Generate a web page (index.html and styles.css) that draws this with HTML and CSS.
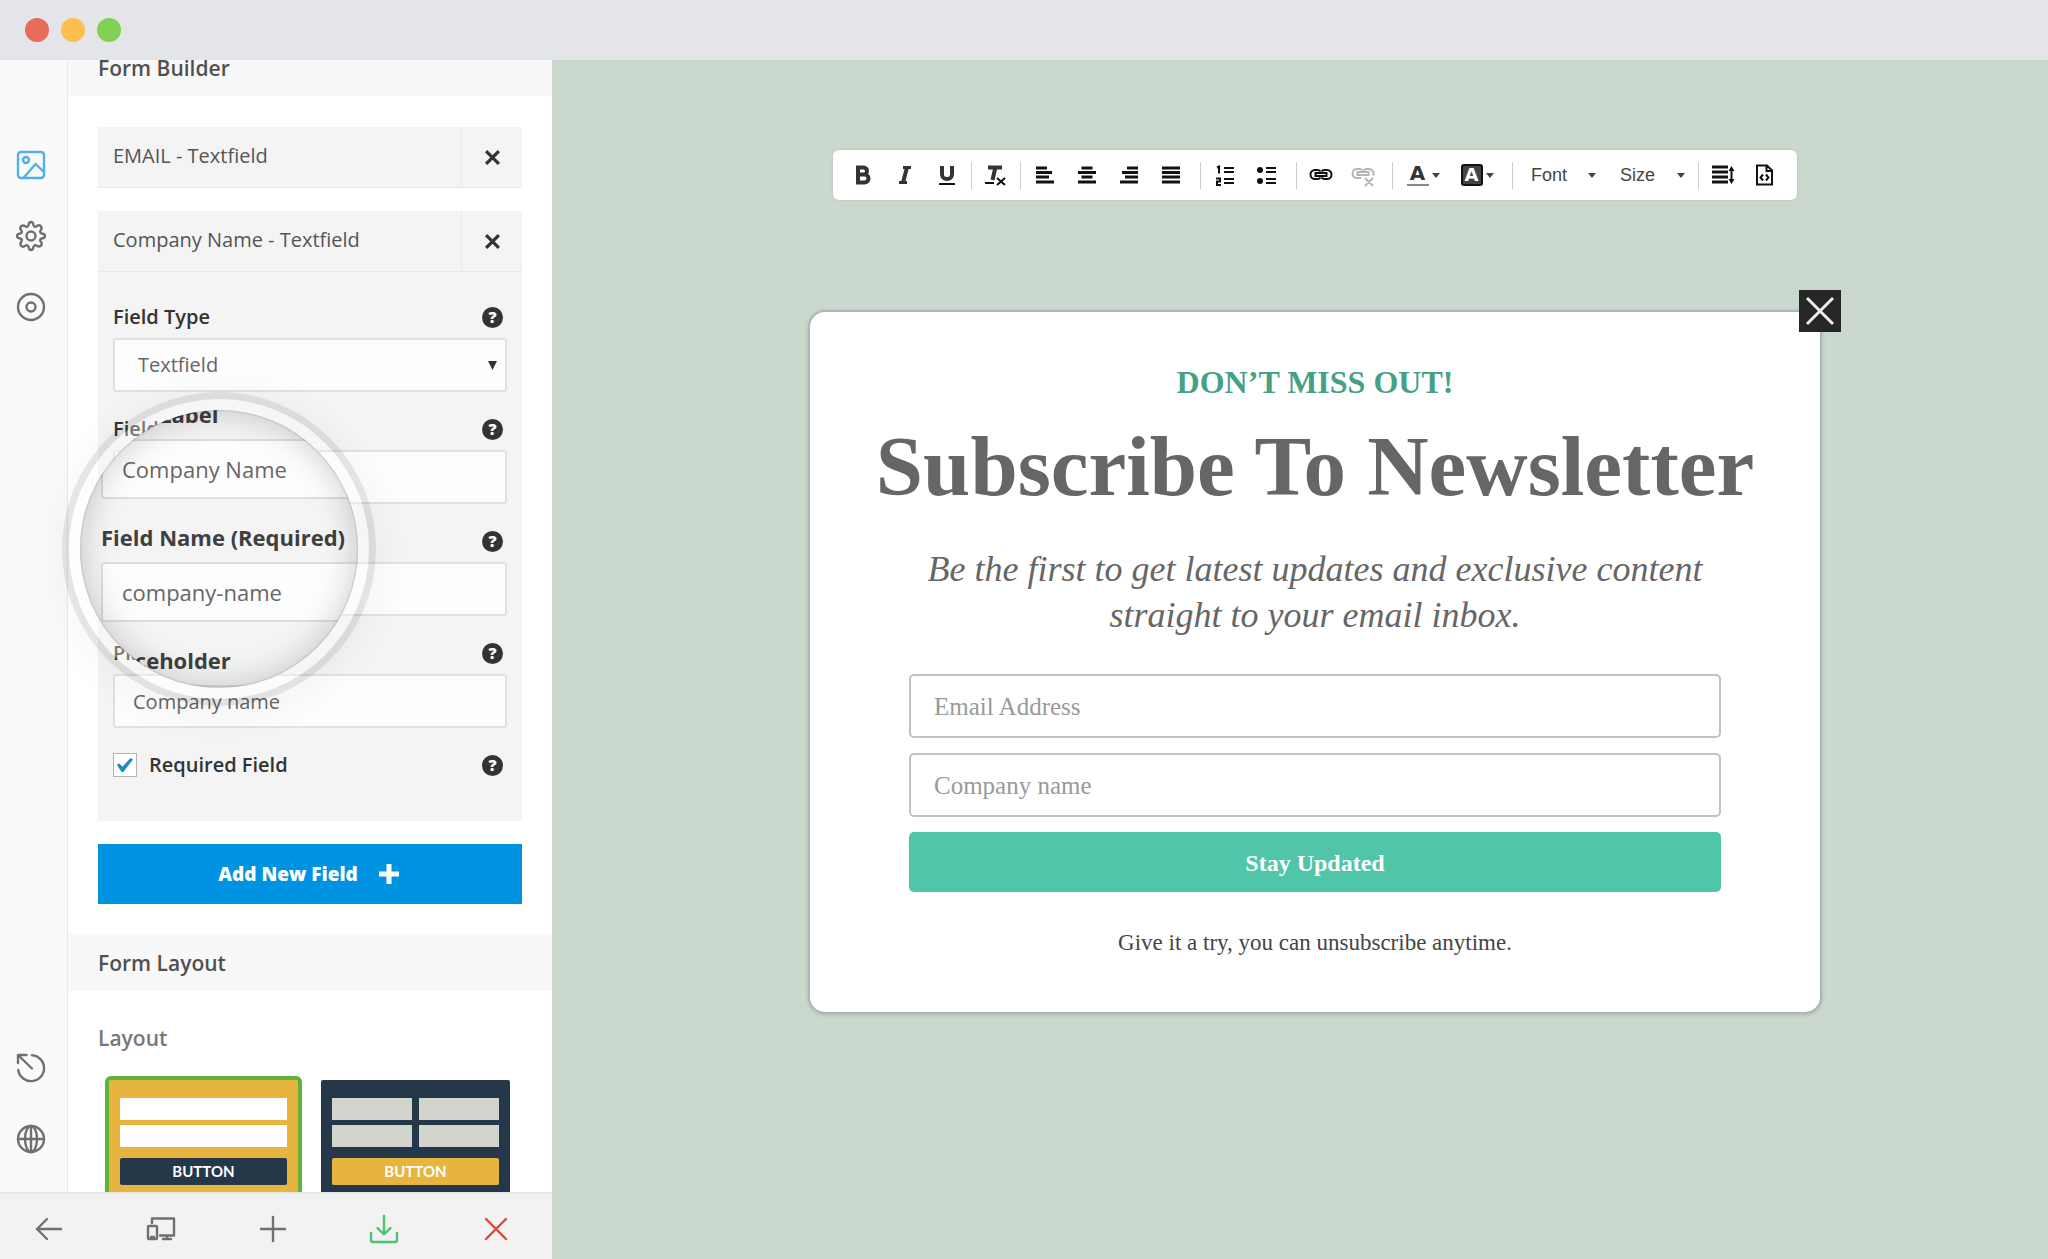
FILE: index.html
```html
<!DOCTYPE html>
<html lang="en">
<head>
<meta charset="utf-8">
<title>Form Builder</title>
<link rel="stylesheet" href="styles.css">
</head>
<body>
<header class="titlebar">
  <span class="dot dot-red"></span>
  <span class="dot dot-yellow"></span>
  <span class="dot dot-green"></span>
</header>
<div class="workspace">
  <aside class="sidebar">
    <div class="sidebar-main">
      <nav class="rail" aria-label="Sections">
        <button class="icon-btn active" aria-label="Design"><svg class="icon" viewBox="0 0 32 32"><rect x="3" y="3" width="26" height="26" rx="3"/><circle cx="11" cy="11" r="3"/><path d="M8.500 29 20.500 15l8.500 8"/></svg></button>
        <button class="icon-btn" aria-label="Settings"><svg class="icon" viewBox="0 0 32 32"><path d="M13.500 5.200Q14 2 16 2t2.500 3.200q.5 1.800 2.300 1.600Q24 4 25.800 6.200T25.200 11.200Q25 13 26.800 13.500 30 14 30 16t-3.200 2.500q-1.800.5-1.600 2.300Q28 24 25.800 25.800T20.800 25.200Q19 25 18.500 26.800 18 30 16 30t-2.500-3.200q-.5-1.800-2.300-1.600Q8 28 6.200 25.800T6.800 20.800Q7 19 5.200 18.500 2 18 2 16t3.200-2.500q1.800-.5 1.600-2.300Q4 8 6.200 6.200T11.200 6.800Q13 7 13.500 5.200z"/><circle cx="16" cy="16" r="4.500"/></svg></button>
        <button class="icon-btn" aria-label="Targeting"><svg class="icon" viewBox="0 0 32 32"><circle cx="16" cy="16" r="13"/><circle cx="16" cy="16" r="4.500"/></svg></button>
        <button class="icon-btn rail-bottom" aria-label="Reset"><svg class="icon" viewBox="0 0 32 32"><path d="M17 3.200A13 13 0 1 1 3.200 18M3 11V3h8.500M3.500 3.500 17 16.500"/></svg></button>
        <button class="icon-btn" aria-label="Language"><svg class="icon" viewBox="0 0 32 32"><circle cx="16" cy="16" r="13"/><ellipse cx="16" cy="16" rx="6" ry="13"/><path d="M3 16h26M16 3v26"/></svg></button>
      </nav>
      <div class="panel">
        <div class="panel-scroll">
          <h2 class="section-title">Form Builder</h2>
          <div class="fields">
            <section class="field-card">
              <div class="field-head"><span class="field-name">EMAIL - Textfield</span><button class="remove" aria-label="Remove field"><svg viewBox="0 0 16 16"><path d="m2 2 12 12M14 2 2 14"/></svg></button></div>
            </section>
            <section class="field-card">
              <div class="field-head"><span class="field-name">Company Name - Textfield</span><button class="remove" aria-label="Remove field"><svg viewBox="0 0 16 16"><path d="m2 2 12 12M14 2 2 14"/></svg></button></div>
              <div class="field-body">
                <div class="row">
                  <div class="row-label"><label for="ftype">Field Type</label><button class="help">?</button></div>
                  <div class="select-wrap"><select class="control select" id="ftype"><option>Textfield</option></select><svg class="select-arrow" viewBox="0 0 9 9"><path d="M0 0h9L4.500 9z"/></svg></div>
                </div>
                <div class="row">
                  <div class="row-label"><label for="flabel">Field Label</label><button class="help">?</button></div>
                  <input class="control" id="flabel" type="text">
                </div>
                <div class="row">
                  <div class="row-label row-label-end"><button class="help">?</button></div>
                  <input class="control" type="text" aria-label="Name">
                </div>
                <div class="row">
                  <div class="row-label"><label for="fplace">Placeholder</label><button class="help">?</button></div>
                  <input class="control" id="fplace" type="text" value="Company name">
                </div>
                <div class="row-check">
                  <input class="check" type="checkbox" id="freq" checked><label for="freq">Required Field</label><button class="help">?</button>
                </div>
                <div class="lens">
                  <div class="lens-view">
                    <label class="lens-label" for="zlabel">Field Label</label>
                    <input class="lens-control" id="zlabel" type="text" value="Company Name">
                    <label class="lens-label" for="zname">Field Name (Required)</label>
                    <input class="lens-control" id="zname" type="text" value="company-name">
                    <label class="lens-label" for="zplace">Placeholder</label>
                    <input class="lens-control" id="zplace" type="text">
                  </div>
                </div>
              </div>
            </section>
            <button class="add-field">Add New Field<svg viewBox="0 0 20 20"><path d="M10 0v20M0 10h20"/></svg></button>
          </div>
          <h2 class="section-title">Form Layout</h2>
          <div class="layout">
            <h3 class="layout-title">Layout</h3>
            <div class="thumbs">
              <button class="thumb thumb-stacked"><span class="bar"></span><span class="bar"></span><span class="thumb-btn">BUTTON</span></button>
              <button class="thumb thumb-grid"><span class="bar"></span><span class="bar"></span><span class="bar"></span><span class="bar"></span><span class="thumb-btn">BUTTON</span></button>
            </div>
          </div>
        </div>
      </div>
    </div>
    <footer class="actions">
      <button class="icon-btn" aria-label="Back"><svg class="icon" viewBox="0 0 32 32"><path d="M28 16H4M14 6 4 16l10 10"/></svg></button>
      <button class="icon-btn" aria-label="Preview devices"><svg class="icon" viewBox="0 0 32 32"><path d="M7 10V5.500h22v17H15M18 26h8M22 23v3"/><rect x="3" y="13" width="9" height="13" rx="1"/><path d="M6 24h3"/></svg></button>
      <button class="icon-btn" aria-label="Add"><svg class="icon" viewBox="0 0 32 32"><path d="M16 4v24M4 16h24"/></svg></button>
      <button class="icon-btn save" aria-label="Save"><svg class="icon" viewBox="0 0 32 32"><path d="M16 3v18M9.500 15l6.500 6.500 6.500-6.500M3 20v7q0 2 2 2h22q2 0 2-2v-7"/></svg></button>
      <button class="icon-btn close" aria-label="Close"><svg class="icon" viewBox="0 0 32 32"><path d="m6 6 20 20M26 6 6 26"/></svg></button>
    </footer>
  </aside>
  <main class="canvas">
    <div class="toolbar" role="toolbar">
      <div class="group">
        <button class="tool" aria-label="Bold"><svg viewBox="0 0 24 24"><path class="bold-line" d="M7 4.500h5.500a3.500 3.500 0 0 1 0 7H7zM7 11.500h6.500a4 4 0 0 1 0 8H7z"/></svg></button>
        <button class="tool" aria-label="Italic"><svg viewBox="0 0 24 24"><path class="bold-line thin" d="M10 4.500h8M6 19.500h8"/><path class="bold-line" d="M14 4.500l-4 15"/></svg></button>
        <button class="tool" aria-label="Underline"><svg viewBox="0 0 24 24"><path class="bold-line" d="M7 3v8.500a5 4.500 0 0 0 10 0V3"/><path class="line" d="M4 21h16"/></svg></button>
      </div>
      <div class="group">
        <button class="tool" aria-label="Remove format"><svg viewBox="0 0 24 24"><path class="bold-line" d="M4 4.500h14M11.500 4l-3 13"/><path class="line" d="M1 20h9M13 15l8 7M21 15l-8 7"/></svg></button>
      </div>
      <div class="group wide">
        <button class="tool" aria-label="Align left"><svg viewBox="0 0 24 24"><path class="bars" d="M3 5h11M3 9.500h16M3 14h13M3 19h18"/></svg></button>
        <button class="tool" aria-label="Align center"><svg viewBox="0 0 24 24"><path class="bars" d="M6.500 5h11M3 9.500h18M6.500 14h11M3 19h18"/></svg></button>
        <button class="tool" aria-label="Align right"><svg viewBox="0 0 24 24"><path class="bars" d="M10 5h11M5 9.500h16M8 14h13M3 19h18"/></svg></button>
        <button class="tool" aria-label="Justify"><svg viewBox="0 0 24 24"><path class="bars" d="M3 5h18M3 9.500h18M3 14h18M3 19h18"/></svg></button>
      </div>
      <div class="group wide">
        <button class="tool" aria-label="Numbered list"><svg viewBox="0 0 24 24"><path class="line" d="M11 5h10M11 9h10M11 16h10M11 20h10M4 4.500l2-1v7M3 15.500h4v3H4v3.500h4"/></svg></button>
        <button class="tool" aria-label="Bulleted list"><svg viewBox="0 0 24 24"><circle cx="5" cy="7" r="3"/><circle cx="5" cy="18" r="3"/><path class="line" d="M11 5h10M11 9h10M11 16h10M11 20h10"/></svg></button>
      </div>
      <div class="group wide">
        <button class="tool" aria-label="Link"><svg viewBox="0 0 24 24"><path class="line" d="M11.500 8.500Q10.500 7 8.500 7H6a4.500 4.500 0 0 0 0 9h2.500q2 0 3-1.500M12.500 8.500Q13.500 7 15.500 7H18a4.500 4.500 0 0 1 0 9h-2.500q-2 0-3-1.500M6.500 10h11v3h-11z"/></svg></button>
        <button class="tool" aria-label="Unlink" disabled><svg viewBox="0 0 24 24"><path class="line" d="M11.500 7.500Q10.500 6 8.500 6H6a4.500 4.500 0 0 0 0 9h4M12.500 7.500Q13.500 6 15.500 6H18a4.500 4.500 0 0 1 4 6.500M6.500 9h11v3h-11zM14 15l8 8M22 15l-8 8"/></svg></button>
      </div>
      <div class="group wide">
        <button class="tool combo" aria-label="Text color"><span class="glyph">A</span><span class="caret"></span></button>
        <button class="tool combo" aria-label="Background color"><span class="glyph boxed">A</span><span class="caret"></span></button>
      </div>
      <div class="group menus">
        <button class="menu">Font<span class="caret"></span></button>
        <button class="menu">Size<span class="caret"></span></button>
      </div>
      <div class="group">
        <button class="tool" aria-label="Line height"><svg viewBox="0 0 24 24"><path class="bars" d="M1 4h16M1 9h16M1 14h16M1 19h16"/><path class="line" d="M20.500 6v12"/><path d="M17.500 8l3-5 3 5zM17.500 16h6l-3 5z"/></svg></button>
        <button class="tool" aria-label="Source"><svg viewBox="0 0 24 24"><path class="line" d="M4 2.500h10l5 5v14H4zM13.500 2.500V8H19M10 11.500 7.500 14.500l2.500 3M13 11.500l2.500 3-2.500 3"/></svg></button>
      </div>
    </div>
    <section class="popup">
      <button class="popup-close" aria-label="Close popup"><svg viewBox="0 0 42 42"><path d="m8 8 26 26M34 8 8 34"/></svg></button>
      <p class="eyebrow">DON’T MISS OUT!</p>
      <h1 class="headline">Subscribe To Newsletter</h1>
      <p class="lead">Be the first to get latest updates and exclusive content<br>straight to your email inbox.</p>
      <form class="form">
        <input class="form-input" type="email" placeholder="Email Address" aria-label="Email Address">
        <input class="form-input" type="text" placeholder="Company name" aria-label="Company name">
        <button class="submit" type="button">Stay Updated</button>
      </form>
      <p class="note">Give it a try, you can unsubscribe anytime.</p>
    </section>
  </main>
</div>
</body>
</html>
```

FILE: styles.css
```css
* { box-sizing: border-box; }
body {
  margin: 0;
  height: 100vh;
  display: flex;
  flex-direction: column;
  overflow: hidden;
  font-family: "Open Sans", "Noto Sans", sans-serif;
  font-size: 20px;
  line-height: 28px;
  color: #555;
}
button, input, select { font: inherit; color: inherit; margin: 0; }
button { padding: 0; border: 0; background: none; }
h1, h2, h3, p { margin: 0; }
svg { display: block; }

.titlebar {
  flex: none;
  height: 60px;
  padding-left: 25px;
  display: flex;
  align-items: center;
  gap: 12px;
  background: #e3e5e9;
  position: relative;
  z-index: 3;
}
.dot { width: 24px; height: 24px; border-radius: 50%; }
.dot-red { background: #e86c5a; }
.dot-yellow { background: #fdbe50; }
.dot-green { background: #80d054; }

.workspace { flex: 1; min-height: 0; display: flex; }
.sidebar { flex: none; width: 552px; display: flex; flex-direction: column; background: #fff; }
.sidebar-main { flex: 1; min-height: 0; display: flex; }
.rail {
  flex: none;
  width: 68px;
  padding: 89px 6px 37px 0;
  display: flex;
  flex-direction: column;
  align-items: center;
  gap: 39px;
  background: #fafafa;
  border-right: 1px solid #e9e9e9;
}
.rail-bottom { margin-top: auto; }
.icon-btn { display: block; color: #707070; }
.icon-btn.active { color: #4fb0ea; }
.icon { width: 32px; height: 32px; fill: none; stroke: currentColor; stroke-width: 2.4; stroke-linecap: round; stroke-linejoin: round; }

.panel { flex: 1; min-width: 0; overflow-x: visible; overflow-y: clip; }
.panel-scroll { margin-top: -21px; }
.section-title {
  padding: 15px 30px 14px;
  font-size: 21px;
  line-height: 28px;
  font-weight: 600;
  color: #505050;
  background: #f8f8f8;
}
.fields { padding: 31px 30px 30px; display: flex; flex-direction: column; gap: 23px; }
.field-card { background: #f4f4f4; }
.field-head { height: 61px; display: flex; border-bottom: 1px solid #e9e9e9; }
.field-name { flex: 1; padding: 15px 15px 0; }
.remove { width: 61px; display: grid; place-items: center; border-left: 1px solid #e9e9e9; }
.remove svg { width: 17px; height: 17px; fill: none; stroke: #333; stroke-width: 3; }
.field-body { position: relative; padding: 31px 15px 42px; }
.row { margin-bottom: 23px; }
.row-label { display: flex; justify-content: space-between; align-items: center; margin-bottom: 7px; padding-right: 4px; }
.row-label-end { height: 28px; justify-content: flex-end; }
.row-label label, .row-check label { font-weight: 600; color: #333; }
.help { width: 21px; height: 21px; border-radius: 50%; background: #333; color: #fff; font-size: 16px; line-height: 21px; font-weight: 800; }
.control {
  display: block;
  width: 100%;
  height: 54px;
  padding: 0 18px;
  border: 2px solid #e1e1e1;
  border-radius: 3px;
  background: #fdfdfd;
  color: #666;
}
.select-wrap { display: grid; align-items: center; }
.select-wrap > * { grid-area: 1 / 1; }
.select { appearance: none; padding: 0 23px; }
.select-arrow { width: 9px; height: 9px; justify-self: end; margin-right: 10px; fill: #333; pointer-events: none; }
.row-check { height: 28px; display: flex; align-items: center; gap: 12px; padding-right: 4px; }
.row-check label { flex: 1; }
.check { appearance: none; width: 24px; height: 24px; border: 1px solid #b4b4b4; background: #fff; display: grid; place-items: center; }
.check:checked::before {
  content: "";
  width: 16px;
  height: 14px;
  background: #1e8cbe;
  clip-path: polygon(0 50%, 14% 38%, 34% 62%, 84% 0, 100% 10%, 40% 100%, 28% 100%);
}

.lens {
  position: absolute;
  z-index: 2;
  left: -18px;
  top: 138px;
  width: 278px;
  height: 278px;
  border-radius: 50%;
}
.lens::before {
  content: "";
  position: absolute;
  inset: -11px;
  border: 11px solid rgba(250, 250, 250, .35);
  border-radius: 50%;
  box-shadow: 0 0 0 7px rgba(0, 0, 0, .08), 0 6px 36px 12px rgba(0, 0, 0, .04);
  pointer-events: none;
}
.lens-view { position: relative; height: 100%; padding-left: 21px; border-radius: 50%; overflow: hidden; background: #f4f4f4; }
.lens::after {
  content: "";
  position: absolute;
  inset: 0;
  border-radius: 50%;
  box-shadow: inset 0 0 34px rgba(0, 0, 0, .2), inset 0 0 2px rgba(0, 0, 0, .35);
  pointer-events: none;
}
.lens-label { display: block; margin: 23px 0 10px; font-size: 22px; line-height: 30px; font-weight: 700; color: #3f3f3f; white-space: nowrap; }
.lens-label:first-child { margin-top: -11px; }
.lens-control { display: block; width: 420px; height: 60px; padding: 0 19px; border: 2px solid #dedede; border-radius: 3px; background: #fdfdfd; font-size: 22px; color: #666; }

.add-field { height: 60px; padding-right: 3px; display: flex; align-items: center; justify-content: center; gap: 21px; background: #0093e1; color: #fff; font-size: 19px; font-weight: 800; }
.add-field svg { width: 20px; height: 20px; stroke: #fff; stroke-width: 5; }

.layout { padding: 33px 30px; }
.layout-title { font-size: 21px; line-height: 28px; font-weight: 600; color: #777; }
.thumbs { display: flex; gap: 15px; margin: 24px 0 0 7px; }
.thumb {
  width: 197px;
  height: 140px;
  padding: 18px 11px;
  display: grid;
  align-content: start;
  row-gap: 5px;
  column-gap: 7px;
  border: 4px solid transparent;
  border-radius: 6px;
  background-clip: padding-box;
}
.thumb-stacked { background-color: #e7b440; border-color: #5fb336; }
.thumb-grid { background-color: #253849; grid-template-columns: 1fr 1fr; }
.bar { height: 22px; background: #fff; }
.thumb-grid .bar { background: #d3d4ce; }
.thumb-btn { grid-column: 1 / -1; height: 27px; margin-top: 6px; border-radius: 2px; background: #253849; color: #fff; font: 700 15px/27px Lato, sans-serif; }
.thumb-grid .thumb-btn { background: #e7b440; }

.actions {
  flex: none;
  height: 67px;
  padding: 4px 40px 0 33px;
  display: flex;
  align-items: center;
  justify-content: space-between;
  background: #f2f2f2;
  border-top: 2px solid #e6e6e6;
  position: relative;
  z-index: 3;
}
.icon-btn.save { color: #4cc274; }
.icon-btn.close { color: #d9463c; }

.canvas { flex: 1; min-width: 0; padding: 90px 16px 0 46px; display: flex; flex-direction: column; align-items: center; background: #cbd8ce; }
.toolbar { height: 50px; padding: 0 8px 0 6px; display: flex; align-items: center; background: #fff; border-radius: 6px; box-shadow: 0 0 3px rgba(0, 0, 0, .12); }
.group { display: flex; align-items: center; height: 27px; padding: 0 3px; border-right: 1px solid #ccc; }
.group.wide { padding-right: 8px; }
.group:last-child { border: 0; }
.tool { width: 42px; height: 27px; display: flex; align-items: center; justify-content: center; color: #111; }
.tool svg { width: 24px; height: 24px; fill: currentColor; }
.tool:disabled { color: #b5b5b5; }
.bold-line { fill: none; stroke: #333; stroke-width: 4; }
.bold-line.thin { stroke-width: 3; }
.line { fill: none; stroke: currentColor; stroke-width: 2; }
.bars { fill: none; stroke: currentColor; stroke-width: 3; }
.tool.combo { width: 54px; gap: 3px; }
.glyph { width: 22px; height: 22px; border-bottom: 2px solid #888; font: 700 20px/19px "DejaVu Sans", sans-serif; color: #333; }
.glyph.boxed { border: 2px solid #111; border-radius: 3px; background: #444; color: #fff; line-height: 18px; font-size: 18px; }
.caret { border: 4px solid transparent; border-top: 5px solid #444; border-bottom: 0; }
.group.menus { gap: 24px; padding: 0 13px 0 18px; }
.menu { width: 65px; display: flex; align-items: center; justify-content: space-between; font: 18px/27px "Liberation Sans", Arial, sans-serif; color: #444; }

.popup {
  position: relative;
  width: 100%;
  max-width: 1014px;
  margin-top: 110px;
  padding: 46px 99px 54px;
  border: 2px solid #aeb6ba;
  border-radius: 17px;
  background: #fff;
  box-shadow: 0 1px 4px rgba(0, 0, 0, .15);
  font-family: "Palatino Linotype", Palatino, "Liberation Serif", serif;
  text-align: center;
}
.popup-close { position: absolute; top: -22px; right: -21px; width: 42px; height: 42px; background: #262626; }
.popup-close svg { fill: none; stroke: #eee; stroke-width: 3; }
.eyebrow { font-size: 32px; line-height: 48px; font-weight: 700; color: #479f86; }
.headline { margin: 12px -60px 0; font-size: 85px; line-height: 96px; font-weight: 700; color: #666; white-space: nowrap; }
.lead { margin: 32px -40px 0; font-size: 36px; line-height: 46px; font-style: italic; color: #666; }
.form { margin-top: 36px; display: flex; flex-direction: column; gap: 15px; }
.form-input { height: 64px; padding: 2px 23px 0; border: 2px solid #c2c2c2; border-radius: 5px; background: #fff; font-size: 25px; }
.form-input::placeholder { color: #999; opacity: 1; }
.submit { height: 60px; padding-top: 2px; border-radius: 5px; background: #50c5a7; color: #fff; font-size: 24px; font-weight: 700; }
.note { margin-top: 36px; font-size: 23px; line-height: 30px; color: #444; }
```
